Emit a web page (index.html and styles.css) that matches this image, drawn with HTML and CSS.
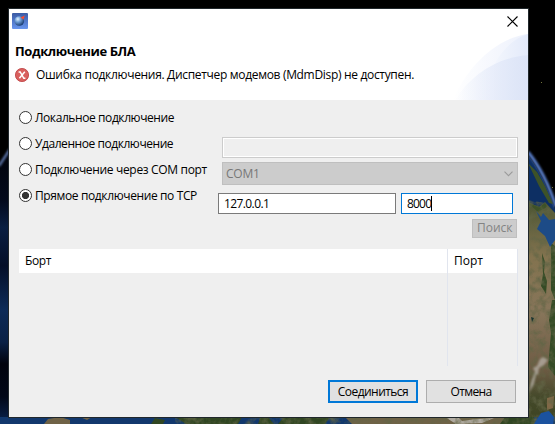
FILE: index.html
```html
<!DOCTYPE html>
<html lang="ru">
<head>
<meta charset="utf-8">
<title>Подключение БЛА</title>
<link rel="stylesheet" href="styles.css">
</head>
<body>
<svg class="globe" viewBox="0 0 555 424" aria-hidden="true">
  <defs>
    <linearGradient id="sea" x1="0" y1="0" x2="0" y2="1">
      <stop offset="0" stop-color="#01030a"/><stop offset=".18" stop-color="#030a1c"/><stop offset=".28" stop-color="#0a1f42"/>
      <stop offset=".42" stop-color="#040f28"/><stop offset=".58" stop-color="#0d2b58"/><stop offset=".7" stop-color="#0a2146"/><stop offset=".78" stop-color="#01030d"/><stop offset=".9" stop-color="#020818"/><stop offset="1" stop-color="#0a2450"/>
    </linearGradient>
    <linearGradient id="land" x1="0" y1="0" x2="0" y2="1">
      <stop offset="0" stop-color="#4b5533"/><stop offset=".25" stop-color="#83734f"/>
      <stop offset=".5" stop-color="#87755a"/><stop offset=".75" stop-color="#6e5b44"/><stop offset=".88" stop-color="#44492a"/><stop offset="1" stop-color="#3c4220"/>
    </linearGradient>
    <filter id="grain" x="0" y="0" width="1" height="1">
      <feTurbulence type="fractalNoise" baseFrequency=".13" numOctaves="4" seed="4" result="n"/>
      <feColorMatrix in="n" type="matrix" values="0 0 0 0 .12  0 0 0 0 .13  0 0 0 0 .06  2 0 0 0 -.8"/>
      <feComposite operator="in" in2="SourceGraphic"/>
    </filter>
    <filter id="soft"><feGaussianBlur stdDeviation=".8"/></filter>
  </defs>
  <rect width="555" height="424"/>
  <path fill="url(#sea)" d="M0 167 9 151V424H0z"/>
  <path fill="none" stroke="#6f8fd0" stroke-width="2" filter="url(#soft)" d="M-1 166 10 149"/>
  <path fill="#0d2f63" d="M528 155Q544 176 555 209V424H528z"/>
  <path fill="none" stroke="#5c82d0" stroke-width="3" filter="url(#soft)" d="M528 152Q545 173 556 207"/>
  <path fill="url(#land)" d="M528 202 539 207 545 202 555 213V424H528z"/>
  <path fill="#3d5228" d="M528 163 537 172 545 186 553 204 549 203 539 186zM528 203 540 207 545 203 547 207 538 212z"/>
  <path fill="#344b25" d="M542 253 545 262 544 272 547 281 546 294 541 286 543 274zM551 243 555 246V300L551 290zM552 300H555V376L548 367 551 333 549 320z"/>
  <path fill="#806847" d="M547 398 554 396 553 408 547 410z"/>
  <path fill="#12386d" d="M0 417H555V424H0z"/>
  <path fill="#6f6246" d="M44 424 48 419 60 417 70 420 70 424zM80 417 92 417 87 420zM345 417H530V424H352z"/>
  <path fill="#304622" d="M151 424 155 418 165 420 163 424zM175 417H242L238 424H186zM260 418 268 417 274 424H258zM284 417H330L325 424H278zM505 417H534L535 424H500z"/>
  <path fill="#b0aaa0" d="M445 417 458 417 462 421 476 419 494 418 482 423 456 424z"/>
  <path fill="#000" filter="url(#grain)" d="M528 200 545 203 555 214V424H528zM175 417H528V424H175z"/>
  <path fill="#1d4b87" d="M536 211 541 217 543 213 549 220 555 219V240L550 247 545 236 537 229 541 221z"/>
  <path fill="#b8b1a8" opacity=".75" filter="url(#soft)" d="M540 359 543 357 548 360 544 365 539 368 538 375 536 374 534 384 529 393 531 382 535 372 533 368 537 366z"/>
  <path fill="#17332f" d="M531 317 534 318 532 322z"/>
  <path fill="#1b529f" d="M534 424 541 413 549 411 554 417 553 424z"/>
  <path fill="#75753c" d="M541 82h1v1h-1zM552 187h1v1h-1z"/>
</svg>

<main class="dialog">
  <header class="banner">
    <svg class="swoosh" viewBox="0 0 80 67" aria-hidden="true">
      <defs>
        <linearGradient id="fade"><stop offset="0" stop-color="#dce4f7" stop-opacity="0"/><stop offset="1" stop-color="#dce4f7"/></linearGradient>
        <linearGradient id="pale"><stop offset="0" stop-color="#edf1fc" stop-opacity="0"/><stop offset="1" stop-color="#edf1fc"/></linearGradient>
        <linearGradient id="mid"><stop offset="0" stop-color="#f3f6fd"/><stop offset="1" stop-color="#e3eafa"/></linearGradient>
      </defs>
      <path fill="url(#pale)" d="M5 67C20 32 49 5 80 1V67z"/>
      <path fill="url(#mid)" d="M46 32C55 15 67 5 80 1V22Q62 24 46 32z"/>
      <path fill="url(#fade)" d="M7 67C23 42 48 25 80 22V67z"/>
    </svg>
    <div class="titlebar">
      <svg class="logo" viewBox="0 0 16 16" aria-hidden="true">
        <defs>
          <linearGradient id="tile" x1="0" y1="0" x2="0" y2="1"><stop offset="0" stop-color="#3b5ba4"/><stop offset="1" stop-color="#6795ee"/></linearGradient>
          <radialGradient id="ball" cx=".35" cy=".3" r=".75"><stop offset="0" stop-color="#e2f3ff"/><stop offset=".4" stop-color="#6f9fd8"/><stop offset="1" stop-color="#123467"/></radialGradient>
        </defs>
        <rect width="16" height="16" rx="1" fill="url(#tile)"/>
        <circle cx="7.3" cy="8" r="4.8" fill="url(#ball)"/>
        <path fill="#ff4b2b" d="M8.5 4.6 12.8 2.6 11.4 6.8 10.2 5.4z"/>
      </svg>
      <svg class="close" viewBox="0 0 11 11" aria-label="Закрыть"><path d="M.5.5l10 10M10.5.5l-10 10" stroke="#000" stroke-width="1.1"/></svg>
    </div>
    <h1><span class="w-title">Подключение БЛА</span></h1>
    <p class="error">
      <svg viewBox="0 0 14 14" aria-hidden="true"><circle cx="7" cy="7" r="6.6" fill="#d9605e" stroke="#bd3d40" stroke-width=".8"/><path d="M3.6 4H5.2L8.8 10.3H10.4M9.8 3.8 4.4 10.3" fill="none" stroke="#fff" stroke-width="1.5"/></svg>
      <span class="w-error">Ошибка подключения. Диспетчер модемов (MdmDisp) не доступен.</span>
    </p>
  </header>

  <section class="form">
    <div class="row"><i class="radio"></i><span class="label w-local">Локальное подключение</span></div>
    <div class="row"><i class="radio"></i><span class="label w-remote">Удаленное подключение</span><div class="field blank"></div></div>
    <div class="row"><i class="radio"></i><span class="label w-com">Подключение через COM порт</span>
      <div class="combo"><span class="w-com1">COM1</span><svg viewBox="0 0 9 6" aria-hidden="true"><path d="M.5.7 4.5 4.7 8.5.7" fill="none" stroke="#9b9b9b" stroke-width="1.1"/></svg></div></div>
    <div class="row"><i class="radio checked"></i><span class="label w-tcp">Прямое подключение по TCP</span>
      <div class="address"><div class="field host"><span class="w-host">127.0.0.1</span></div><div class="field port"><span class="w-port">8000</span><i class="caret"></i></div></div></div>
    <div class="search"><span class="w-search">Поиск</span></div>
  </section>

  <section class="table">
    <div class="column"><div class="th"><span class="w-board">Борт</span></div></div>
    <div class="column"><div class="th"><span class="w-num">Порт</span></div></div>
  </section>

  <footer>
    <div class="button primary"><span class="w-ok">Соединиться</span></div>
    <div class="button"><span class="w-cancel">Отмена</span></div>
  </footer>
</main>
</body>
</html>
```
FILE: styles.css
```css
* { box-sizing: border-box; }
body {
  margin: 0;
  width: 555px;
  height: 424px;
  padding: 9px;
  overflow: hidden;
  background: #000;
  color: #000;
  font: 12px/16px "Open Sans", "Noto Sans", sans-serif;
}
svg { display: block; }
span { white-space: nowrap; }
.globe { position: absolute; left: 0; top: 0; width: 555px; height: 424px; }
.dialog {
  position: relative;
  display: flex;
  flex-direction: column;
  width: 519px;
  height: 408px;
  background: #efefef;
  box-shadow: 0 0 0 1px #20272b;
}
.banner { position: relative; height: 91px; background: #fff; }
.swoosh { position: absolute; right: 0; bottom: 0; width: 80px; height: 67px; }
.titlebar { position: relative; display: flex; justify-content: space-between; padding: 4px 10px 0 3px; height: 33px; }
.logo { width: 16px; height: 16px; }
.close { width: 11px; height: 11px; margin-top: 3px; }
h1 { margin: 0; padding-left: 6px; font-size: 13px; line-height: 18px; font-weight: 700; position: relative; }
.error { position: relative; display: flex; gap: 7px; margin: 7px 0 0; padding-left: 6px; }
.error svg { width: 14px; height: 14px; margin-top: 1px; }
.form { height: 149px; padding-top: 5px; }
.row { display: flex; align-items: center; height: 26px; padding-left: 10px; }
.radio { width: 13px; height: 13px; margin-bottom: 1px; border: 1px solid #333; border-radius: 50%; background: #fff; }
.checked { background: radial-gradient(circle, #333 0 3.3px, #fff 3.9px); }
.label { width: 187px; margin-left: 3px; }
.field { height: 21px; border: 1px solid #7a7a7a; background: #fff; padding: 2px 5px; display: flex; }
.blank { width: 296px; margin-top: 6px; border-color: #ccc; background: #efefef; box-shadow: inset 0 0 0 1px #fff; }
.combo { display: flex; align-items: center; justify-content: space-between; width: 296px; height: 23px; margin-top: 7px; padding: 0 4px 0 3px; border: 1px solid #bfbfbf; background: #ccc; color: #777; }
.combo svg { width: 9px; height: 6px; }
.address { display: flex; gap: 5px; margin: 15px 0 0 -4px; }
.host { width: 178px; }
.port { width: 112px; border-color: #0078d7; }
.caret { width: 1px; height: 15px; background: #000; }
.search { width: 45px; height: 19px; margin: 10px 0 0 463px; padding-left: 4px; border: 1px solid #bfbfbf; background: #ccc; color: #838383; line-height: 15px; }
.table { display: grid; grid-template-columns: 429px 70px; height: 117px; margin: 0 10px; }
.column { border-right: 1px solid #e1e5ee; }
.th { height: 24px; padding: 4px 6px; background: #fff; }
footer { display: flex; justify-content: flex-end; gap: 8px; padding: 14px 12px 0 0; }
.button { display: flex; align-items: center; justify-content: center; width: 90px; height: 23px; border: 1px solid #adadad; background: #e1e1e1; }
.primary { border: 2px solid #0078d7; }

.w-title { letter-spacing: -.4px; }
.w-error { letter-spacing: -.32px; }
.w-local { letter-spacing: -.41px; }
.w-remote { letter-spacing: -.44px; }
.w-com { letter-spacing: -.33px; }
.w-tcp { letter-spacing: -.38px; }
.w-com1 { letter-spacing: -.2px; }
.w-search { letter-spacing: 0; }
.w-host { letter-spacing: -.6px; }
.w-port { letter-spacing: -.8px; }
.w-board { letter-spacing: -.4px; }
.w-ok { letter-spacing: -.55px; }
.w-cancel { letter-spacing: -.65px; }
```
